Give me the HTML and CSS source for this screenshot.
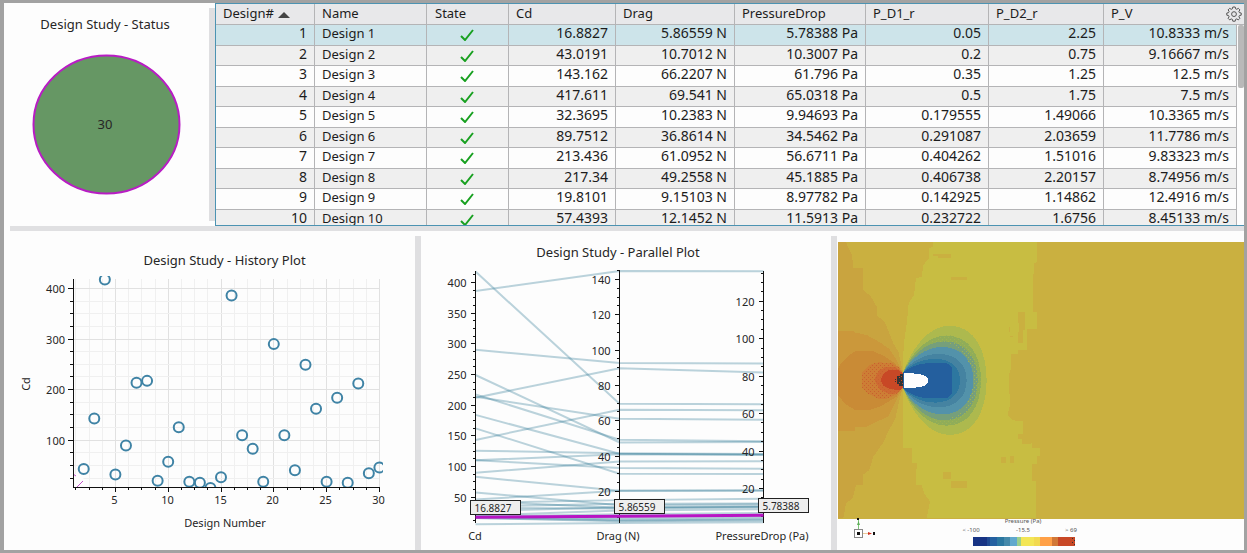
FILE: index.html
```html
<!DOCTYPE html>
<html lang="en">
<head>
<meta charset="utf-8">
<title>Design Study</title>
<link rel="stylesheet" href="styles.css">
</head>
<body>
<main class="workspace">
  <section class="upper">
    <div class="status">
      <svg class="plot" viewBox="4 3 205 223" role="img" aria-label="Design Study - Status">
        <text class="title" x="105" y="29">Design Study - Status</text>
        <ellipse class="pie" cx="106.5" cy="124.5" rx="73" ry="69"/>
        <text class="pie-label" x="105" y="129">30</text>
      </svg>
    </div>
    <div class="split split-upper"></div>
    <div class="designs">
      <table class="grid">
        <colgroup>
          <col class="c-id"><col class="c-name"><col class="c-state"><col class="c-cd"><col class="c-drag"><col class="c-drop"><col class="c-d1"><col class="c-d2"><col class="c-v"><col class="c-bar">
        </colgroup>
        <thead>
          <tr><th>Design# <svg class="sort" viewBox="0 0 12 6"><path d="M0 6L6 0L12 6Z"/></svg></th><th>Name</th><th class="state-head">State</th><th>Cd</th><th>Drag</th><th>PressureDrop</th><th>P_D1_r</th><th>P_D2_r</th><th colspan="2">P_V</th></tr>
        </thead>
        <tbody id="rows"></tbody>
      </table>
      <button class="gear" type="button" aria-label="Table settings">
        <svg viewBox="0 0 16 16"><path d="M6.8 1h2.4l.4 1.8 1.2.5 1.5-1 1.6 1.6-1 1.5.5 1.2 1.8.4v2.200l-1.800.4-.5 1.200 1 1.500-1.600 1.600-1.500-1-1.200.5-.4 1.800H6.800l-.4-1.800-1.200-.5-1.500 1-1.600-1.600 1-1.500-.5-1.200L.800 9.200V7l1.800-.4.5-1.200-1-1.500 1.600-1.600 1.500 1 1.200-.5z"/><circle cx="8" cy="8.100" r="2.400"/></svg>
      </button>
      <div class="track"><div class="thumb"></div></div>
    </div>
  </section>
  <div class="split-across"></div>
  <section class="lower">
    <div class="panel panel-history"><svg class="plot" id="history" viewBox="4 231 411 319" role="img" aria-label="History Plot"></svg></div>
    <div class="split"></div>
    <div class="panel panel-parallel"><svg class="plot" id="parallel" viewBox="421 231 410 319" role="img" aria-label="Parallel Plot"></svg></div>
    <div class="split"></div>
    <div class="panel panel-field"><svg class="plot" id="field" viewBox="837 231 407 319" role="img" aria-label="Pressure field"></svg></div>
  </section>
</main>
<script src="app.js"></script>
</body>
</html>
```
FILE: styles.css
```css
* { box-sizing: border-box; }

body {
  margin: 0;
  font: 13px/16px "Noto Sans", "Open Sans", sans-serif;
  color: #1c1c1c;
  background: #fdfdfd;
}

.workspace {
  display: flex;
  flex-direction: column;
  height: 100vh;
  border: 3px solid #a2a2a2;
  border-left-width: 4px;
  overflow: hidden;
}

.upper { display: flex; flex: none; height: 223px; }
.status { flex: 0 0 205px; }
.split { flex: 0 0 6px; margin-top: 5px; background: #dfdfe1; }
.split-upper { margin-bottom: 5px; }
.split-across { flex: 0 0 5px; margin-left: 6px; background: #e0e0e2; }
.lower { display: flex; flex: 1; min-height: 0; }
.panel { flex: 410 1 0; min-width: 0; }
.panel-history { flex-grow: 411; }
.panel-field { flex-grow: 407; }
.plot { display: block; width: 100%; height: 100%; }

/* Design table */
.designs {
  position: relative;
  flex: 1;
  min-width: 0;
  border: 1px solid #4c93b2;
  border-right: 0;
  overflow: hidden;
  background: #fdfdfd;
}
.grid {
  width: 100%;
  table-layout: fixed;
  border-collapse: separate;
  border-spacing: 0;
}
.c-id { width: 99px; }
.c-name { width: 112px; }
.c-state { width: 82px; }
.c-cd { width: 107px; }
.c-drag { width: 119px; }
.c-drop { width: 131px; }
.c-d1 { width: 123px; }
.c-d2 { width: 115px; }
.c-v { width: 133px; }
.c-bar { width: 7px; }
.grid th, .grid td {
  padding: 0 7px;
  border-right: 1px solid #b4b4b6;
  border-bottom: 1px solid #b4b4b6;
  white-space: nowrap;
}
.grid th {
  height: 21px;
  padding-bottom: 2px;
  line-height: 16px;
  font-weight: 400;
  text-align: left;
  background: #e8e8ea;
}
.grid th:last-child { border-right: 0; }
.grid .state-head { padding-left: 8px; }
.grid td {
  height: 20px;
  line-height: 16px;
  text-align: right;
  vertical-align: top;
}
.grid tr:nth-child(odd) td { height: 21px; }
.grid tr:nth-child(even) td { background: #efefef; }
.grid tbody tr:first-child td { background: #cde4ea; }
.grid .num { font-size: 14px; }
.grid .name { text-align: left; }
.grid .state { text-align: center; }
.grid tbody tr td:last-child {
  padding: 0;
  border: 0;
  background: #fdfdfd;
}
.sort { width: 12px; height: 6px; margin-left: 1px; fill: #444; }
.tick {
  display: block;
  width: 14px;
  height: 12px;
  margin: 4px 0 0 26px;
  fill: none;
  stroke: #18a020;
  stroke-width: 2;
}
.gear {
  position: absolute;
  top: 2px;
  right: 2px;
  width: 16px;
  height: 16px;
  padding: 0;
  border: 0;
  background: none;
}
.gear svg { display: block; fill: none; stroke: #555; stroke-width: 1; }
.track {
  position: absolute;
  top: 21px;
  right: 0;
  bottom: 0;
  width: 6px;
}
.thumb { height: 63px; border-radius: 2px; background: #b9b9b9; }

/* Plots */
text { fill: #262626; font-size: 11px; }
.title { font-size: 13px; text-anchor: middle; }
.mid { text-anchor: middle; }
.end { text-anchor: end; }
.pie { fill: #669764; stroke: #b81cc4; stroke-width: 2; }
.pie-label { font-size: 13px; text-anchor: middle; }
.mark { stroke: #111; stroke-width: 1; shape-rendering: crispEdges; }
.minor { stroke: #f0f0f0; shape-rendering: crispEdges; }
.major { stroke: #e1e1e1; shape-rendering: crispEdges; }
.dot { fill: none; stroke: #3f83a5; stroke-width: 2; }
.hidden-dot { fill: #fdfdfd; }
.hint { fill: none; stroke: #c050c8; stroke-width: 1; }
.design { fill: none; stroke: #22708f; stroke-width: 2; opacity: .3; }
.chosen { fill: none; stroke: #b814c4; stroke-width: 3; }
.flag { fill: #eee; stroke: #222; shape-rendering: crispEdges; }
.flag-text { font-size: 10px; }
.tiny { font-size: 6px; text-anchor: middle; fill: #555; }
```
FILE: app.js
```js
const rows = [
  [1, "16.8827", "5.86559", "5.78388", "0.05", "2.25", "10.8333"],
  [2, "43.0191", "10.7012", "10.3007", "0.2", "0.75", "9.16667"],
  [3, "143.162", "66.2207", "61.796", "0.35", "1.25", "12.5"],
  [4, "417.611", "69.541", "65.0318", "0.5", "1.75", "7.5"],
  [5, "32.3695", "10.2383", "9.94693", "0.179555", "1.49066", "10.3365"],
  [6, "89.7512", "36.8614", "34.5462", "0.291087", "2.03659", "11.7786"],
  [7, "213.436", "61.0952", "56.6711", "0.404262", "1.51016", "9.83323"],
  [8, "217.34", "49.2558", "45.1885", "0.406738", "2.20157", "8.74956"],
  [9, "19.8101", "9.15103", "8.97782", "0.142925", "1.14862", "12.4916"],
  [10, "57.4393", "12.1452", "11.5913", "0.232722", "1.6756", "8.45133"]
];
const check = '<svg class="tick" viewBox="0 0 14 12"><path d="M1 7L5 11L13 1"/></svg>';
document.getElementById("rows").innerHTML = rows.map(r =>
  `<tr><td class="num">${r[0]}</td><td class="name">Design ${r[0]}</td><td class="state">${check}</td>` +
  `<td class="num">${r[1]}</td><td class="num">${r[2]} N</td><td class="num">${r[3]} Pa</td>` +
  `<td class="num">${r[4]}</td><td class="num">${r[5]}</td><td class="num">${r[6]} m/s</td><td></td></tr>`).join("");

const line = (c, x1, y1, x2, y2) => `<line class="${c}" x1="${x1}" y1="${y1}" x2="${x2}" y2="${y2}"/>`;
const text = (c, x, y, s) => `<text class="${c}" x="${x}" y="${y}">${s}</text>`;

// Cd, drag and pressure drop of designs 11 to 30
const later = [
  [125.5, 41.5, 38.5], [18, 4, 4], [16, 3, 3], [5.500, 2, 2], [27, 11, 10.5],
  [386, 144.8, 136], [110, 41, 38], [83, 20.3, 18.9], [18, 5, 5], [290, 92.7, 86.8],
  [110, 33.2, 30.6], [40.5, 15, 14.5], [249, 47.7, 44.8], [162, 30, 27.7], [18, 7, 7],
  [184, 41.3, 38], [16, 3.5, 3.5], [212, 89.7, 82], [34.5, 13, 12], [46, 20.3, 18.9]
];
const designs = rows.map(r => [+r[1], +r[2], +r[3]]).concat(later);

function history() {
  const X = n => 62.6 + 10.56 * n, Y = v => 490.8 - 0.5058 * v;
  const snap = v => Math.floor(v) + 0.5;
  let grid = "", marks = "", labels = "";
  for (let n = 1.25; n <= 30; n += 1.25) {
    const big = n % 5 === 0, x = snap(X(n));
    grid += line(big ? "major" : "minor", x, 279, x, 487);
    marks += line("mark", x, 487, x, big ? 492 : 490);
    if (big) labels += text("mid", x - 1, 504, n);
  }
  for (let v = 25; v <= 400; v += 25) {
    const big = v % 100 === 0, y = snap(Y(v));
    grid += line(big ? "major" : "minor", 74, y, 379, y);
    marks += line("mark", big ? 68 : 70, y, 73, y);
    if (big) labels += text("end", 65, y + 4, v);
  }
  const dots = designs.map((d, i) => i === 0
    ? '<circle class="hidden-dot" cx="77" cy="481" r="7"/><path class="hint" d="M77 487L83 481M73 474L76 476"/>'
    : `<circle class="dot" cx="${X(i + 1)}" cy="${Y(d[0])}" r="5"/>`).join("");
  document.getElementById("history").innerHTML =
    '<clipPath id="area"><rect x="73" y="276" width="310" height="212"/></clipPath>' +
    text("title", 224.5, 265, "Design Study - History Plot") + grid +
    `<g clip-path="url(#area)">${dots}</g>` +
    '<path class="mark" fill="none" d="M73.5 279V487.5H380"/>' + marks + labels +
    text("mid", 225, 527, "Design Number") +
    '<text class="mid" transform="translate(30 384) rotate(-90)">Cd</text>';
}

function parallel() {
  const axes = [
    { x: 475.5, a: 527.7, k: 0.6133, step: 12.5, big: 50, max: 417, label: "Cd", lx: 475 },
    { x: 619.5, a: 526.6, k: 1.765, step: 5, big: 20, max: 145, label: "Drag (N)", lx: 618 },
    { x: 763.5, a: 526, k: 1.873, step: 5, big: 20, max: 136, label: "PressureDrop (Pa)", lx: 762 }
  ];
  const Y = (i, v) => axes[i].a - axes[i].k * v;
  const path = (d, c) => `<path class="${c}" d="M475.5 ${Y(0, d[0])}L619.5 ${Y(1, d[1])}L763.5 ${Y(2, d[2])}"/>`;
  let out = text("title", 618, 257, "Design Study - Parallel Plot");
  out += designs.slice(1).map(d => path(d, "design")).join("");
  axes.forEach((ax, i) => {
    out += line("mark", ax.x, 271, ax.x, 523);
    for (let v = ax.step; v <= ax.max; v += ax.step) {
      const big = v % ax.big === 0, y = Math.floor(Y(i, v)) + 0.5;
      out += line("mark", ax.x - (big ? 5 : 3), y, ax.x, y);
      if (big) out += text("end", ax.x - 9, y + 4, v);
    }
    out += text("mid", ax.lx, 540, ax.label);
  });
  out += path(designs[0], "chosen");
  [[470.5, 500.5, "16.8827"], [614.5, 499.5, "5.86559"], [758.5, 498.5, "5.78388"]].forEach(f => {
    out += `<rect class="flag" x="${f[0]}" y="${f[1]}" width="50" height="14"/>` + text("flag-text", f[0] + 4, f[1] + 11, f[2]);
  });
  document.getElementById("parallel").innerHTML = out;
}

function field() {
  // Wake contours: closed lobes opening from the nose of the body
  const lobe = (top, bottom, right, fill) => {
    const w = right - 219, x = k => 219 + w * k;
    return `<path fill="${fill}" d="M219 413C${x(.1)} ${top + (413 - top) * .5} ${x(.3)} ${top} ${x(.56)} ${top}` +
      `C${x(.85)} ${top} ${right} ${top + (436 - top) * .45} ${right} 436` +
      `C${right} ${bottom - (bottom - 436) * .45} ${x(.85)} ${bottom} ${x(.56)} ${bottom}` +
      `C${x(.3)} ${bottom} ${x(.1)} ${bottom - (bottom - 459) * .5} 219 459Z"/>`;
  };
  const shape = (fill, d) => `<path fill="${fill}" d="${d}"/>`;
  let f = '<rect x="24" y="22" width="1218" height="829" fill="#cab040"/>';
  f += shape("#c8bd42", "M219 413L221 330L231 260L236 205L252 180L258 130L275 125L280 90L296 70V40L310 34V22H622V82L612 84V115L608 120V232H620V282H591V345H565V356H543V400L536 420L540 510L533 540L548 556L580 558V625H606V640H629V662H622V688H606V738H618V849H290L300 800L283 775L275 750H258V712L262 685H247L245 640H219Z");
  f += shape("#cab040", "M563 232H586V285H580V325H563V290H568V265H563ZM536 275H541V302L553 306H541ZM310 56H362V70H323V64H310ZM363 126H410V134H363ZM340 710H362V731H340ZM363 738H410V758H363ZM513 665H528V685H513ZM540 663H553V683H540ZM563 597H603V628H575V612H563Z");
  f += shape("#c9a43f", "M24 22H48L66 60L70 98H100V165L123 185L140 215V240L165 262L190 325L205 350L219 413V459L212 480L196 550L180 580L158 625L130 665L118 705L98 720V750H78L68 790L48 805L40 849H24Z");
  f += shape("#cb983b", "M24 287H73V292L110 300L150 322L178 342L197 370L219 413V459L194 505L174 545L140 560L110 575H75V587H24Z");
  f += shape("#c98b36", "M24 404L30 388L52 365L76 348H130L165 365L195 385L219 420V452L200 485L150 515L120 525H76L50 510L24 482Z");
  f += shape("#cd7e35", "M97 420V412L118 390L145 382L185 384L205 395L219 415V457L200 478L170 491H145L115 476L97 460Z");
  f += shape("#ce6a32", "M133 434L146 408L165 396H196L219 414V458L204 474L180 478L150 464Z");
  f += shape("url(#speckle)", "M97 412L118 390L145 382L185 384L205 395L219 415V457L200 478L170 491H145L115 476L97 460Z");
  f += shape("#c84826", "M152 436L160 418L175 405H205L219 415V457L210 466L180 462L160 452Z");
  f += shape("#333", "M202 424H209V418H221V454H208V447H202Z");
  f += shape("#c84826", "M206 427h3v3h-3zM212 424h3v3h-3zM212 436h3v3h-3zM206 442h3v3h-3zM215 445h3v3h-3z");
  f += shape("#333", "M196 433h3v3h-3zM196 439h3v3h-3z");
  [[272, 600, 470, "#adb94e"], [302, 572, 453, "#90ad59"], [319, 556, 443, "#769f7b"],
   [336, 538, 430, "#5392aa"], [357, 517, 410, "#4583a1"], [371, 503, 390, "#2d77a0"],
   [384, 490, 366, "#245f9e"]].forEach(a => f += lobe(...a));
  f += shape("#245f9e", "M240 400L290 384H350L366 396V476L350 490H290L240 472Z");
  f += shape("url(#greenspeckle)", "M290 325L340 301H370L415 330L450 390L453 450L430 515L370 571H330L290 548L345 557L405 527L430 455L428 400L390 340L340 319Z");
  f += shape("#fdfdfd", "M221 415H250L275 419Q294 424 294 436Q294 450 275 455L250 459H221Z");

  const stops = [[0, "#173384"], [.14, "#1f4a92"], [.17, "#2460a0"], [.24, "#2b77a0"], [.3, "#4589aa"],
    [.36, "#61a9cd"], [.43, "#9bcf8c"], [.47, "#f3e656"], [.6, "#f2d950"], [.66, "#ffa047"],
    [.77, "#d27837"], [.83, "#c84826"]];
  let bar = "";
  stops.forEach((s, i) => {
    const end = i + 1 < stops.length ? stops[i + 1][0] : 1;
    bar += `<rect x="${973 + 102 * s[0]}" y="537" width="${102 * (end - s[0])}" height="9" fill="${s[1]}"/>`;
  });
  document.getElementById("field").innerHTML =
    '<defs><pattern id="speckle" width="12" height="12" patternUnits="userSpaceOnUse"><path fill="#c9602f" d="M0 0h3v3h-3zM6 6h3v3h-3z"/></pattern>' +
    '<pattern id="greenspeckle" width="12" height="12" patternUnits="userSpaceOnUse"><path fill="#9fb253" d="M0 0h3v3h-3zM6 6h3v3h-3z"/></pattern></defs>' +
    `<g transform="translate(830 235) scale(.33333333)" shape-rendering="crispEdges">${f}</g>` +
    text("tiny", 1023, 523, "Pressure (Pa)") + text("tiny", 971, 532, "&lt; -100") +
    text("tiny", 1023, 532, "-15.5") + text("tiny", 1071, 532, "&gt; 69") +
    `<g shape-rendering="crispEdges">${bar}<path fill="#333" d="M1072 538h1v1h-1zM1074 540h1v1h-1zM1072 542h1v1h-1zM1074 544h1v1h-1z"/></g>` +
    '<path d="M858.5 529V519" stroke="#7cc576"/><path d="M863 533.5H870" stroke="#eccb9b"/>' +
    '<path d="M868 532L872 533.5L868 535Z" fill="#d03020"/><path d="M857 525L858.500 521L860 525Z" fill="#5cae58"/>' +
    '<rect x="854.5" y="529.5" width="8" height="8" fill="#fff" stroke="#888"/>' +
    '<path fill="#111" d="M857 532h3v3h-3zM873 532h2v3h-2zM857 518h2v2h-2z"/>';
}

history();
parallel();
field();
```
